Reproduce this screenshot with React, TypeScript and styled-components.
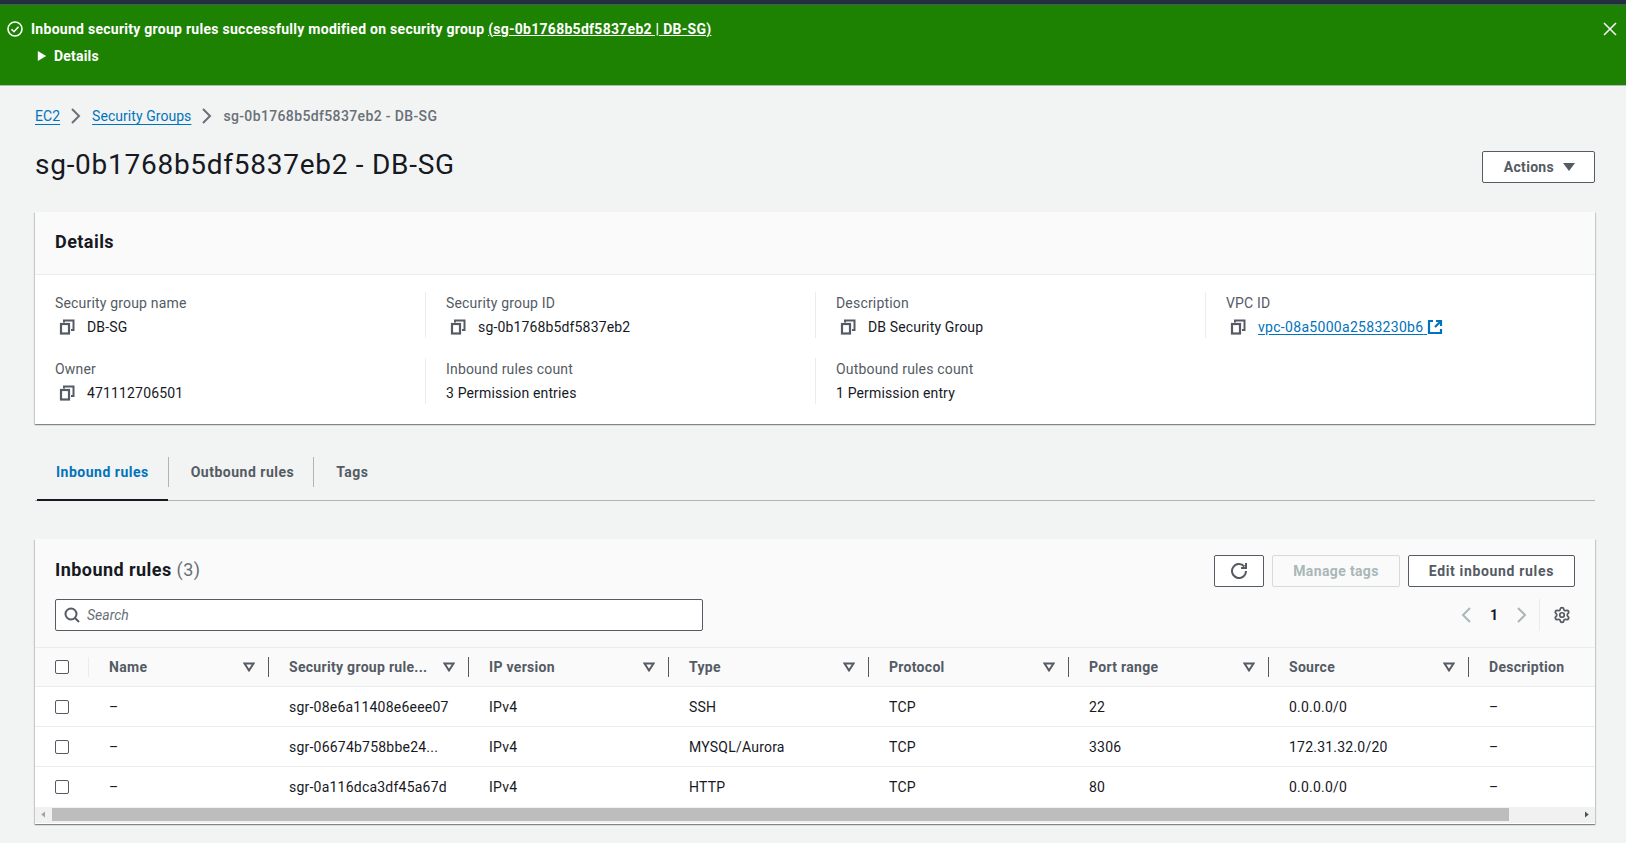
import React from "react";
import styled, { createGlobalStyle } from "styled-components";
import { Settings } from "lucide-react";

const Global = createGlobalStyle`
  html, body { margin: 0; padding: 0; height: 843px; overflow: hidden; background: #f2f3f3; }
  body { font-family: Roboto, "Liberation Sans", sans-serif; font-size: 14px; color: #16191f; }
  * { box-sizing: border-box; }
`;

const TopStrip = styled.div`
  height: 5px;
  background: #232f3e;
  border-bottom: 1px solid #4a5560;
`;
const Flash = styled.div`
  height: 81px;
  background: #1d8102;
  border-bottom: 1px solid #b5bab5;
  color: #fff;
  display: flex;
  justify-content: space-between;
  padding: 14px 8px 0 7px;
`;
const FlashBody = styled.div`
  display: flex;
  flex-direction: column;
  gap: 8px;
`;
const FlashLine = styled.div`
  display: flex;
  align-items: center;
  gap: 8px;
  height: 19px;
  font-weight: 700;
  font-size: 14px;
  letter-spacing: 0.27px;
`;
const FlashLink = styled.span`
  text-decoration: underline;
`;
const DetailsToggle = styled.div`
  display: flex;
  align-items: center;
  gap: 7px;
  height: 19px;
  font-weight: 700;
  padding-left: 30px;
  letter-spacing: 0.2px;
`;
const FlashClose = styled.span`
  display: flex;
  padding-top: 2px;
`;
const Main = styled.main`
  padding: 0 31px 0 35px;
`;
const Crumbs = styled.nav`
  display: flex;
  align-items: center;
  height: 20px;
  margin-top: 20px;
  letter-spacing: 0.1px;
`;
const CrumbLink = styled.a`
  color: #0073bb;
  text-decoration: underline;
  text-underline-offset: 3px;
  letter-spacing: 0.05px;
`;
const CrumbSep = styled.span`
  display: flex;
  width: 32px;
  padding-right: 2px;
  justify-content: center;
  color: #687078;
`;
const CrumbCurrent = styled.span`
  color: #687078;
  font-weight: 500;
  letter-spacing: 0.36px;
`;
const TitleRow = styled.div`
  display: flex;
  justify-content: space-between;
  align-items: center;
  margin-top: 20px;
  height: 40px;
`;
const Title = styled.h1`
  margin: 0 0 2px;
  font-size: 28px;
  font-weight: 400;
  line-height: 36px;
  letter-spacing: 0.73px;
  color: #16191f;
`;
const Button = styled.button<{ $disabled?: boolean; $track?: number }>`
  height: 32px;
  padding: 0 20px;
  display: inline-flex;
  align-items: center;
  justify-content: center;
  gap: 10px;
  background: ${(p) => (p.$disabled ? "transparent" : "#fff")};
  border: 1px solid ${(p) => (p.$disabled ? "#d5dbdb" : "#545b64")};
  border-radius: 2px;
  color: ${(p) => (p.$disabled ? "#aab7b8" : "#545b64")};
  font-family: inherit;
  font-size: 14px;
  font-weight: 700;
  letter-spacing: ${(p) => p.$track ?? 0.3}px;
`;
const ActionsButton = styled(Button)`
  margin-top: 2px;
  gap: 9px;
  padding: 0 19px 0 21px;
`;
const Card = styled.section`
  background: #fff;
  box-shadow: 0 1px 1px 0 rgba(0, 28, 36, 0.3), 1px 1px 1px 0 rgba(0, 28, 36, 0.15),
    -1px 1px 1px 0 rgba(0, 28, 36, 0.15);
`;
const DetailsCard = styled(Card)`
  margin-top: 26px;
  height: 212px;
`;
const CardHead = styled.div`
  height: 63px;
  background: #fafafa;
  border-bottom: 1px solid #eaeded;
  display: flex;
  align-items: center;
  padding-left: 20px;
`;
const CardTitle = styled.h2`
  margin: 0 0 2px;
  font-size: 18px;
  font-weight: 700;
  line-height: 22px;
  letter-spacing: 0.45px;
  color: #16191f;
`;
const Count = styled.span`
  font-weight: 400;
  color: #687078;
`;
const FieldGrid = styled.div`
  display: grid;
  grid-template-columns: repeat(4, 390px);
  grid-auto-rows: 46px;
  row-gap: 20px;
  padding: 17px 0 0 0;
`;
const Field = styled.div<{ $first?: boolean }>`
  padding-left: 20px;
  border-left: ${(p) => (p.$first ? "0" : "1px solid #eaeded")};
`;
const Label = styled.div`
  line-height: 20px;
  margin-top: 1px;
  color: #545b64;
  letter-spacing: 0.18px;
`;
const Value = styled.div`
  display: flex;
  align-items: center;
  line-height: 20px;
  margin-top: 4px;
  letter-spacing: 0.15px;
  color: #16191f;
`;
const CopyWrap = styled.span`
  display: flex;
  width: 32px;
  padding-left: 4px;
  color: #545b64;
`;
const ExtLink = styled.a`
  display: inline-flex;
  align-items: center;
  color: #0073bb;
`;
const ExtText = styled.span`
  text-decoration: underline;
  text-underline-offset: 2px;
  letter-spacing: 0.3px;
`;
const Tabs = styled.div`
  display: flex;
  margin-top: 33px;
  height: 44px;
  border-bottom: 1px solid #aab7b8;
  padding-left: 2px;
`;
const Tab = styled.div<{ $active?: boolean; $lead: number }>`
  height: 44px;
  display: flex;
  align-items: flex-start;
  padding: 5px 19px 0 ${(p) => p.$lead}px;
  font-weight: 700;
  line-height: 20px;
  letter-spacing: 0.5px;
  color: ${(p) => (p.$active ? "#0073bb" : "#545b64")};
  border-bottom: ${(p) => (p.$active ? "2px solid #16191f" : "0")};
`;
const TabDivider = styled.span`
  width: 1px;
  height: 30px;
  background: #aab7b8;
`;
const TableCard = styled(Card)`
  margin-top: 38px;
  height: 285px;
`;
const TableHead = styled.div`
  height: 108px;
  background: #fafafa;
  padding: 16px 20px 0;
  display: flex;
  flex-direction: column;
  gap: 12px;
`;
const HeadRow = styled.div`
  display: flex;
  justify-content: space-between;
  align-items: center;
`;
const Actions = styled.div`
  display: flex;
  gap: 8px;
`;
const IconButton = styled(Button)`
  width: 50px;
  padding: 0;
`;
const SearchBox = styled.div`
  width: 648px;
  height: 32px;
  border: 1px solid #545b64;
  border-radius: 2px;
  background: #fff;
  display: flex;
  align-items: center;
  gap: 7px;
  padding-left: 8px;
  color: #545b64;
`;
const SearchText = styled.span`
  color: #687078;
  font-style: italic;
`;
const Pager = styled.div`
  display: flex;
  align-items: center;
  height: 32px;
  padding-right: 4px;
`;
const PageNum = styled.span`
  width: 38px;
  text-align: center;
  font-weight: 700;
  color: #16191f;
`;
const PagerDivider = styled.span`
  width: 1px;
  height: 32px;
  background: #eaeded;
  margin: 0 13px 0 10px;
`;
const TableClip = styled.div`
  overflow: hidden;
`;
const Grid = styled.table`
  border-collapse: collapse;
  table-layout: fixed;
  width: 1560px;
`;
const HeadCellRow = styled.tr`
  height: 39px;
  background: #fafafa;
  border-top: 1px solid #eaeded;
  border-bottom: 1px solid #eaeded;
`;
const BodyRow = styled.tr`
  height: 40px;
  border-bottom: 1px solid #eaeded;
  &:last-child { border-bottom: 0; }
`;
const Th = styled.th`
  padding: 0;
  text-align: left;
  font-weight: 700;
  color: #545b64;
  letter-spacing: 0.3px;
  overflow: hidden;
`;
const ThInner = styled.div<{ $plain?: boolean }>`
  display: flex;
  align-items: center;
  justify-content: space-between;
  height: 20px;
  padding: 0 13px 0 20px;
  border-right: ${(p) => (p.$plain ? "0" : "1px solid #545b64")};
`;
const Td = styled.td`
  padding: 0 0 0 20px;
  white-space: nowrap;
  letter-spacing: 0.22px;
  color: #16191f;
`;
const CheckCell = styled.td`
  padding: 0 0 0 20px;
`;
const CheckTh = styled.th`
  padding: 0 0 0 20px;
`;
const CheckRow = styled.div`
  display: flex;
  height: 20px;
  align-items: center;
  border-right: 1px solid #eaeded;
`;
const Check = styled.span`
  display: block;
  width: 14px;
  height: 14px;
  border: 1px solid #545b64;
  border-radius: 2px;
  background: #fff;
`;
const ScrollBar = styled.div`
  height: 16px;
  background: #f1f1f1;
  display: flex;
  align-items: center;
  color: #505050;
`;
const ScrollArrow = styled.span`
  display: flex;
  width: 17px;
  justify-content: center;
`;
const ScrollThumb = styled.div`
  flex: 0 0 1457px;
  height: 13px;
  background: #bdbdbd;
`;
const ScrollTrack = styled.div`
  flex: 1;
`;

const Copy = () => (
  <CopyWrap>
    <svg width="16" height="16" viewBox="0 0 16 16" fill="none" stroke="currentColor">
      <rect x="2" y="5" width="8" height="9.5" strokeWidth="2.2" />
      <path d="M5 3.5V1.5h9.5V11H12" strokeWidth="2" />
    </svg>
  </CopyWrap>
);
const Filter = () => (
  <svg width="12" height="12" viewBox="0 0 12 12" fill="none" stroke="#545b64" strokeWidth="2">
    <path d="M1.5 2.5h9L6 9.5z" />
  </svg>
);
const Chevron = ({ left, color }: { left?: boolean; color: string }) => (
  <svg width="16" height="16" viewBox="0 0 16 16" fill="none" stroke={color} strokeWidth="2">
    <path d={left ? "M11 1 4 8l7 7" : "M5 1l7 7-7 7"} />
  </svg>
);
const Tri = ({ d, size, color }: { d: string; size: number; color: string }) => (
  <svg width={size} height={size} viewBox="0 0 12 12" fill={color}>
    <path d={d} />
  </svg>
);

const fields = [
  ["Security group name", "DB-SG", true],
  ["Security group ID", "sg-0b1768b5df5837eb2", true],
  ["Description", "DB Security Group", true],
  ["VPC ID", "vpc-08a5000a2583230b6", true],
  ["Owner", "471112706501", true],
  ["Inbound rules count", "3 Permission entries", false],
  ["Outbound rules count", "1 Permission entry", false],
] as const;

const columns = [
  "Name",
  "Security group rule...",
  "IP version",
  "Type",
  "Protocol",
  "Port range",
  "Source",
];
const rows = [
  ["–", "sgr-08e6a11408e6eee07", "IPv4", "SSH", "TCP", "22", "0.0.0.0/0", "–"],
  ["–", "sgr-06674b758bbe24...", "IPv4", "MYSQL/Aurora", "TCP", "3306", "172.31.32.0/20", "–"],
  ["–", "sgr-0a116dca3df45a67d", "IPv4", "HTTP", "TCP", "80", "0.0.0.0/0", "–"],
];

export default function App() {
  return (
    <>
      <Global />
      <TopStrip />
      <Flash>
        <FlashBody>
          <FlashLine>
            <svg width="16" height="16" viewBox="0 0 16 16" fill="none" stroke="#fff" strokeWidth="1.6">
              <circle cx="8" cy="8" r="7" />
              <path d="M4.5 8.2 7 10.7l4.5-5" />
            </svg>
            <span>
              Inbound security group rules successfully modified on security group{" "}
              <FlashLink>(sg-0b1768b5df5837eb2 | DB-SG)</FlashLink>
            </span>
          </FlashLine>
          <DetailsToggle>
            <Tri d="M1 0l10 6-10 6z" size={10} color="#fff" />
            Details
          </DetailsToggle>
        </FlashBody>
        <FlashClose>
          <svg width="16" height="16" viewBox="0 0 16 16" fill="none" stroke="#f2f3f3" strokeWidth="1.6">
            <path d="M2 2l12 12M14 2 2 14" />
          </svg>
        </FlashClose>
      </Flash>
      <Main>
        <Crumbs>
          <CrumbLink>EC2</CrumbLink>
          <CrumbSep><Chevron color="#687078" /></CrumbSep>
          <CrumbLink>Security Groups</CrumbLink>
          <CrumbSep><Chevron color="#687078" /></CrumbSep>
          <CrumbCurrent>sg-0b1768b5df5837eb2 - DB-SG</CrumbCurrent>
        </Crumbs>
        <TitleRow>
          <Title>sg-0b1768b5df5837eb2 - DB-SG</Title>
          <ActionsButton>
            Actions
            <Tri d="M0 2h12L6 10z" size={12} color="#545b64" />
          </ActionsButton>
        </TitleRow>
        <DetailsCard>
          <CardHead>
            <CardTitle>Details</CardTitle>
          </CardHead>
          <FieldGrid>
            {fields.map(([label, value, copy], i) => (
              <Field key={label} $first={i === 0 || i === 4}>
                <Label>{label}</Label>
                <Value>
                  {copy && <Copy />}
                  {label === "VPC ID" ? (
                    <ExtLink>
                      <ExtText>{value}&nbsp;</ExtText>
                      <svg width="16" height="16" viewBox="0 0 16 16" fill="none" stroke="#0073bb" strokeWidth="2.2">
                        <path d="M6 2H2v12h12v-4M9 2h5v5M14 2 8 8" />
                      </svg>
                    </ExtLink>
                  ) : (
                    value
                  )}
                </Value>
              </Field>
            ))}
          </FieldGrid>
        </DetailsCard>
        <Tabs>
          <Tab $active $lead={19}>Inbound rules</Tab>
          <TabDivider />
          <Tab $lead={22}>Outbound rules</Tab>
          <TabDivider />
          <Tab $lead={22}>Tags</Tab>
        </Tabs>
        <TableCard>
          <TableHead>
            <HeadRow>
              <CardTitle>
                Inbound rules <Count>(3)</Count>
              </CardTitle>
              <Actions>
                <IconButton>
                  <svg width="16" height="16" viewBox="0 0 16 16" fill="none" stroke="#545b64" strokeWidth="2">
                    <path d="M10 5h5V0" />
                    <path d="M15 8a6.99 6.99 0 1 1-1.67-4.5" />
                  </svg>
                </IconButton>
                <Button $disabled $track={0.36}>Manage tags</Button>
                <Button $track={0.66}>Edit inbound rules</Button>
              </Actions>
            </HeadRow>
            <HeadRow>
              <SearchBox>
                <svg width="16" height="16" viewBox="0 0 16 16" fill="none" stroke="#545b64" strokeWidth="2">
                  <circle cx="7" cy="7" r="5.5" />
                  <path d="M11 11l4 4" />
                </svg>
                <SearchText>Search</SearchText>
              </SearchBox>
              <Pager>
                <Chevron left color="#aab7b8" />
                <PageNum>1</PageNum>
                <Chevron color="#aab7b8" />
                <PagerDivider />
                <Settings size={18} strokeWidth={2.3} color="#545b64" />
              </Pager>
            </HeadRow>
          </TableHead>
          <TableClip>
            <Grid>
              <colgroup>
                <col width="54" />
                {columns.map((c, i) => (
                  <col key={c} width={i === 0 ? 180 : 200} />
                ))}
                <col />
              </colgroup>
              <thead>
                <HeadCellRow>
                  <CheckTh>
                    <CheckRow>
                      <Check />
                    </CheckRow>
                  </CheckTh>
                  {columns.map((c) => (
                    <Th key={c}>
                      <ThInner>
                        {c}
                        <Filter />
                      </ThInner>
                    </Th>
                  ))}
                  <Th>
                    <ThInner $plain>Description</ThInner>
                  </Th>
                </HeadCellRow>
              </thead>
              <tbody>
                {rows.map((r) => (
                  <BodyRow key={r[1]}>
                    <CheckCell>
                      <Check />
                    </CheckCell>
                    {r.map((v, i) => (
                      <Td key={i}>{v}</Td>
                    ))}
                  </BodyRow>
                ))}
              </tbody>
            </Grid>
          </TableClip>
          <ScrollBar>
            <ScrollArrow>
              <Tri d="M8 2v8L3 6z" size={9} color="#a3a3a3" />
            </ScrollArrow>
            <ScrollThumb />
            <ScrollTrack />
            <ScrollArrow>
              <Tri d="M4 2v8l5-4z" size={9} color="#505050" />
            </ScrollArrow>
          </ScrollBar>
        </TableCard>
      </Main>
    </>
  );
}
